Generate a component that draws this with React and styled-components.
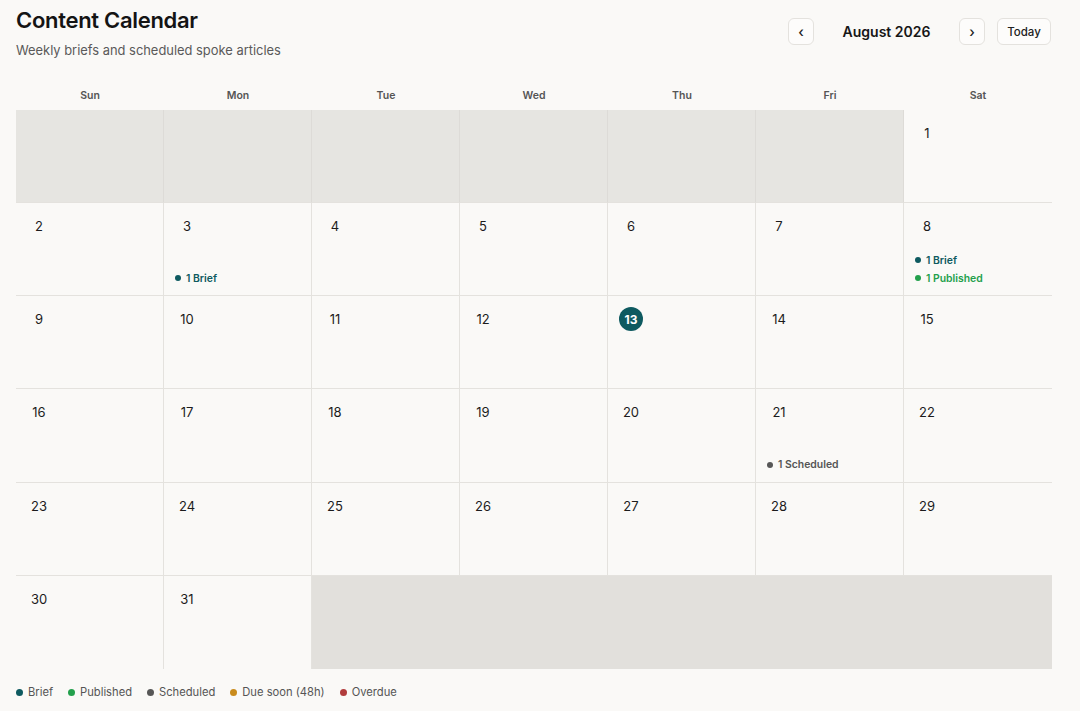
import React from 'react'
import styled, { createGlobalStyle } from 'styled-components'

const GlobalStyle = createGlobalStyle`
  html, body {
    margin: 0;
    padding: 0;
    background: #faf9f7;
    font-family: Inter, "Noto Sans", "Liberation Sans", sans-serif;
    color: #1a1a1a;
  }
`

const Page = styled.div`
  padding: 6px 29px 0 16px;
`

const Header = styled.header`
  display: flex;
  justify-content: space-between;
  align-items: flex-start;
`

const Title = styled.h1`
  margin: 0;
  font-size: 22px;
  line-height: 28px;
  font-weight: 600;
  letter-spacing: -0.3px;
  color: #141414;
`

const Subtitle = styled.p`
  margin: 8px 0 0;
  font-size: 12.9px;
  line-height: 18px;
  color: #5a5a5a;
`

const Nav = styled.div`
  display: flex;
  align-items: center;
  gap: 12px;
  margin-top: 12px;
`

const NavButton = styled.button`
  box-sizing: border-box;
  height: 27px;
  min-width: ${p => (p.$wide ? '54px' : '26px')};
  padding: 0 ${p => (p.$wide ? '9px' : '0')};
  border: 1px solid #e4e2de;
  border-radius: 6px;
  background: #fdfcfb;
  font-family: inherit;
  font-size: ${p => (p.$wide ? '11.5px' : '14px')};
  font-weight: 500;
  color: #222;
  cursor: pointer;
  display: flex;
  align-items: center;
  justify-content: center;
`

const MonthLabel = styled.div`
  width: 121px;
  text-align: center;
  font-size: 14px;
  font-weight: 600;
  color: #161616;
`

const WeekdayRow = styled.div`
  display: grid;
  grid-template-columns: repeat(7, 148px);
  margin-top: 22px;
  height: 28px;
  align-items: center;
`

const Weekday = styled.div`
  text-align: center;
  font-size: 10.5px;
  font-weight: 600;
  color: #555;
  padding-bottom: 1px;
`

const Grid = styled.div`
  display: grid;
  grid-template-columns: repeat(7, 148px);
  grid-template-rows: repeat(6, 1fr);
  height: 559px;
`

const Cell = styled.div`
  box-sizing: border-box;
  display: flex;
  flex-direction: column;
  padding: 11px 11px 8px;
  background: ${p => (p.$outside ? '#e6e5e1' : 'transparent')};
  border-right: ${p => (p.$lastCol ? 'none' : `1px solid ${p.$outside ? '#dddbd7' : '#e4e2de'}`)};
  border-bottom: ${p => (p.$lastRow ? 'none' : '1px solid #e4e2de')};
`

const Filler = styled.div`
  grid-column: span ${p => p.$span};
  background: #e2e0dc;
`

const DayNum = styled.div`
  width: 24px;
  height: 24px;
  border-radius: 50%;
  display: flex;
  align-items: center;
  justify-content: center;
  font-size: ${p => (p.$today ? '12px' : '13px')};
  font-weight: ${p => (p.$today ? 700 : 400)};
  color: ${p => (p.$today ? '#fff' : '#1c1c1c')};
  background: ${p => (p.$today ? '#0e5a60' : 'transparent')};
`

const Events = styled.div`
  margin-top: auto;
  display: flex;
  flex-direction: column;
`

const Event = styled.div`
  display: flex;
  align-items: center;
  gap: 5px;
  height: 18px;
  font-size: 10.4px;
  font-weight: 600;
  color: ${p => p.$color};
`

const Dot = styled.span`
  width: ${p => p.$size || 6}px;
  height: ${p => p.$size || 6}px;
  border-radius: 50%;
  background: ${p => p.$color};
  flex: none;
`

const Legend = styled.div`
  display: flex;
  gap: 15px;
  margin-top: 14px;
  height: 18px;
  align-items: center;
`

const LegendItem = styled.div`
  display: flex;
  align-items: center;
  gap: 5px;
  font-size: 11.2px;
  color: #555;
`

const COLORS = {
  brief: '#0e5a60',
  published: '#23a04c',
  scheduled: '#575757',
  due: '#c98b1c',
  overdue: '#b13c3c'
}

const EVENT_TEXT = {
  brief: '#0e5a60',
  published: '#23a04c',
  scheduled: '#555'
}

const events = {
  3: [{ type: 'brief', label: '1 Brief' }],
  8: [
    { type: 'brief', label: '1 Brief' },
    { type: 'published', label: '1 Published' }
  ],
  21: [{ type: 'scheduled', label: '1 Scheduled' }]
}

const weekdays = ['Sun', 'Mon', 'Tue', 'Wed', 'Thu', 'Fri', 'Sat']

const legend = [
  ['brief', 'Brief'],
  ['published', 'Published'],
  ['scheduled', 'Scheduled'],
  ['due', 'Due soon (48h)'],
  ['overdue', 'Overdue']
]

const buildCells = () => {
  const cells = []
  const lead = 6
  for (let i = 0; i < lead; i++) {
    cells.push(<Cell key={`lead-${i}`} $outside />)
  }
  for (let d = 1; d <= 31; d++) {
    const idx = lead + d - 1
    const col = idx % 7
    const row = Math.floor(idx / 7)
    cells.push(
      <Cell key={d} $lastCol={col === 6} $lastRow={row === 5}>
        <DayNum $today={d === 13}>{d}</DayNum>
        {events[d] && (
          <Events>
            {events[d].map(e => (
              <Event key={e.label} $color={EVENT_TEXT[e.type]}>
                <Dot $color={COLORS[e.type]} />
                {e.label}
              </Event>
            ))}
          </Events>
        )}
      </Cell>
    )
  }
  cells.push(<Filler key="trail" $span={5} />)
  return cells
}

const App = () => (
  <>
    <GlobalStyle />
    <Page>
      <Header>
        <div>
          <Title>Content Calendar</Title>
          <Subtitle>Weekly briefs and scheduled spoke articles</Subtitle>
        </div>
        <Nav>
          <NavButton aria-label="Previous month">‹</NavButton>
          <MonthLabel>August 2026</MonthLabel>
          <NavButton aria-label="Next month">›</NavButton>
          <NavButton $wide>Today</NavButton>
        </Nav>
      </Header>
      <WeekdayRow>
        {weekdays.map(w => (
          <Weekday key={w}>{w}</Weekday>
        ))}
      </WeekdayRow>
      <Grid>{buildCells()}</Grid>
      <Legend>
        {legend.map(([k, label]) => (
          <LegendItem key={k}>
            <Dot $color={COLORS[k]} $size={7} />
            {label}
          </LegendItem>
        ))}
      </Legend>
    </Page>
  </>
)

export default App
